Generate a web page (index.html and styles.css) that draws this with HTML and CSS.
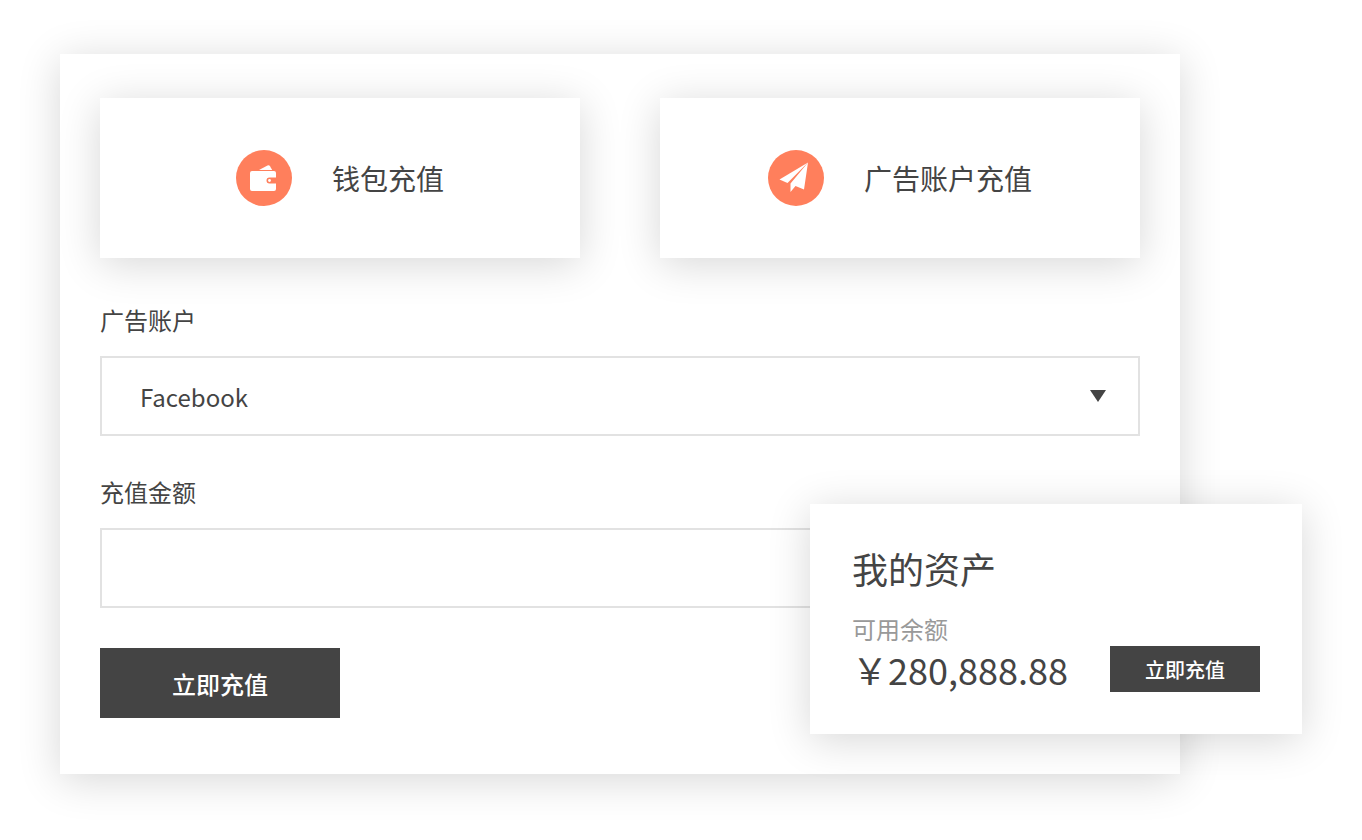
FILE: index.html
```html
<!DOCTYPE html>
<html lang="zh-CN">
<head>
  <meta charset="UTF-8">
  <meta name="viewport" content="width=device-width, initial-scale=1.0">
  <title>账户充值</title>
  <link rel="stylesheet" href="styles.css">
</head>
<body>
  <main class="stage">
    <form class="panel">
      <div class="types">
        <button type="button" class="type">
          <svg class="type-icon" viewBox="0 0 56 56" aria-hidden="true">
            <circle cx="28" cy="28" r="28" fill="#ff7f5c"/>
            <path d="M23 20 31.500 15.600q1.600-.8 2.500.6L36.200 20z" fill="#fff"/>
            <path d="M16 21h22q2 0 2 2v4.500h-6.500a3 3 0 0 0 0 6H40V39q0 2-2 2H16q-2 0-2-2V23q0-2 2-2z" fill="#fff"/>
            <circle cx="33.500" cy="30.500" r="1.400" fill="#fff"/>
          </svg>
          <span>钱包充值</span>
        </button>
        <button type="button" class="type">
          <svg class="type-icon" viewBox="0 0 56 56" aria-hidden="true">
            <circle cx="28" cy="28" r="28" fill="#ff7f5c"/>
            <path d="M40 12.500 11.500 29.500 19.500 33z" fill="#fff"/>
            <path d="M40 12.500 36 39.500 27.500 36 22.500 42 22.500 33.500z" fill="#fff"/>
          </svg>
          <span>广告账户充值</span>
        </button>
      </div>

      <div class="field">
        <label for="account">广告账户</label>
        <div class="select-box">
          <select id="account">
            <option>Facebook</option>
          </select>
          <svg class="arrow" viewBox="0 0 16 12" aria-hidden="true"><path d="M0 0h16L8 12z" fill="#444"/></svg>
        </div>
      </div>

      <div class="field">
        <label for="amount">充值金额</label>
        <input id="amount" type="text">
      </div>

      <button type="button" class="submit">立即充值</button>
    </form>

    <!-- floats over the corner of the form -->
    <section class="assets">
      <h2>我的资产</h2>
      <div class="assets-row">
        <div>
          <div class="assets-label">可用余额</div>
          <div class="assets-amount">￥280,888.88</div>
        </div>
        <button type="button" class="submit small">立即充值</button>
      </div>
    </section>
  </main>
</body>
</html>
```

FILE: styles.css
```css
* {
  box-sizing: border-box;
}
body {
  margin: 0;
  background: #fff;
  color: #444;
  font-family: "Noto Sans CJK SC", sans-serif;
  font-size: 24px;
}
button,
input,
select {
  font: inherit;
  color: inherit;
  border-radius: 0;
}
button {
  border: none;
  padding: 0;
  cursor: pointer;
}
.stage {
  position: relative;
  padding: 54px 182px 66px 60px;
}
.panel,
.type,
.assets {
  background: #fff;
  box-shadow: 0 6px 40px rgba(0, 0, 0, 0.16);
}
.panel {
  padding: 44px 40px 56px;
}
.types {
  display: grid;
  grid-template-columns: 1fr 1fr;
  gap: 80px;
  margin-bottom: 44px;
}
.type {
  display: flex;
  align-items: center;
  justify-content: center;
  gap: 40px;
  height: 160px;
  font-size: 28px;
}
.type-icon {
  width: 56px;
  height: 56px;
}
.field {
  margin-bottom: 38px;
}
.field label {
  display: block;
  line-height: 36px;
  margin-bottom: 18px;
}
.field select,
.field input {
  display: block;
  width: 100%;
  height: 80px;
  padding: 0 38px;
  border: 2px solid #e2e2e2;
  background: #fff;
  appearance: none;
}
.select-box {
  position: relative;
}
.arrow {
  position: absolute;
  right: 34px;
  top: 34px;
  width: 16px;
  height: 12px;
  pointer-events: none;
}
.submit {
  width: 240px;
  height: 70px;
  margin-top: 2px;
  background: #444;
  color: #fff;
  font-weight: 500;
}
.assets {
  position: absolute;
  right: 60px;
  bottom: 106px;
  width: 492px;
  padding: 42px;
}
.assets h2 {
  margin: 0 0 22px;
  font-size: 36px;
  font-weight: 400;
  line-height: 44px;
}
.assets-row {
  display: flex;
  align-items: flex-end;
  justify-content: space-between;
}
.assets-label {
  line-height: 34px;
  color: #999;
}
.assets-amount {
  font-size: 36px;
  line-height: 46px;
}
.submit.small {
  width: 150px;
  height: 46px;
  margin: 0;
  font-size: 20px;
}
```
